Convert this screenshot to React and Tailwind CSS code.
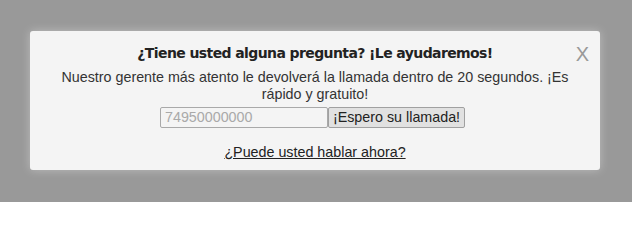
const Callback = () => {
  return (
    <div className="h-[202px] w-[632px] bg-[#999999] pt-[31px] pl-[30px] font-['Liberation_Sans',Arial,sans-serif]">
      <div className="relative w-[570px] h-[139px] bg-[#f4f4f4] rounded-[3px] shadow-[0_0_10px_rgba(255,255,255,0.35)] px-[26px] text-center">
        <span className="absolute right-[11px] top-[13px] text-[20px] leading-none text-[#999999] cursor-pointer">X</span>
        <h3 className="pt-[13px] text-[14px] leading-[18px] font-bold text-[#222222] font-['DejaVu_Sans',Verdana,sans-serif] tracking-[-0.6px]">
          ¿Tiene usted alguna pregunta? ¡Le ayudaremos!
        </h3>
        <p className="mt-[7px] text-[14.3px] leading-[17px] text-[#333333]">
          Nuestro gerente más atento le devolverá la llamada dentro de 20 segundos. ¡Es rápido y gratuito!
        </p>
        <div className="mt-[4px] flex justify-center pr-[5px]">
          <input
            type="text"
            placeholder="74950000000"
            className="w-[168px] h-[21px] border border-[#a9a9a9] rounded-[2px] bg-[#f4f4f4] px-[4px] text-[14.3px] placeholder:text-[#a9a9a9] outline-none"
          />
          <button className="w-[137px] h-[21px] border border-[#a0a0a0] rounded-[2px] bg-[#e1e1e1] text-[14.3px] leading-none text-[#222222]">
            ¡Espero su llamada!
          </button>
        </div>
        <p className="mt-[16px] text-[14.3px] leading-[17px]">
          <a href="#" className="underline text-[#222222]">¿Puede usted hablar ahora?</a>
        </p>
      </div>
    </div>
  )
}

export default function App() {
  return <Callback />
}
